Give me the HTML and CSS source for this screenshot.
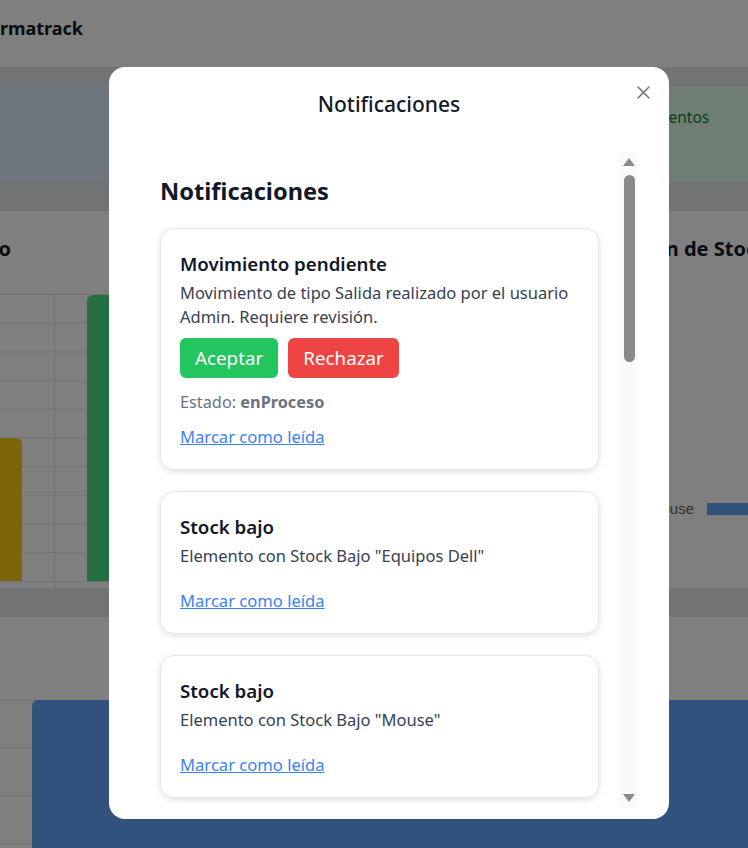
FILE: index.html
```html
<!DOCTYPE html>
<html lang="es">
<head>
<meta charset="utf-8">
<title>Informatrack</title>
<link rel="stylesheet" href="styles.css">
</head>
<body>
<div class="page">
  <header class="topbar"><span class="brand">Informatrack</span></header>
  <main class="dash">
    <section class="stats">
      <div class="stat stat-blue"><span class="stat-label">Total Productos</span></div>
      <div class="stat stat-green"><span class="stat-label">Movimientos</span></div>
    </section>
    <section class="charts">
      <div class="chart-card chart-a">
        <h3 class="chart-title">Stock por Producto</h3>
        <svg class="chart-svg" width="680" height="305" viewBox="0 0 680 305">
          <g stroke="rgba(0,0,0,0.1)" stroke-width="1">
            <line x1="0" y1="11.5" x2="680" y2="11.5"/>
            <line x1="0" y1="40.2" x2="680" y2="40.2"/>
            <line x1="0" y1="68.9" x2="680" y2="68.9"/>
            <line x1="0" y1="97.6" x2="680" y2="97.6"/>
            <line x1="0" y1="126.3" x2="680" y2="126.3"/>
            <line x1="0" y1="155" x2="680" y2="155"/>
            <line x1="0" y1="183.7" x2="680" y2="183.7"/>
            <line x1="0" y1="212.4" x2="680" y2="212.4"/>
            <line x1="0" y1="241.1" x2="680" y2="241.1"/>
            <line x1="0" y1="269.8" x2="680" y2="269.8"/>
            <line x1="0" y1="298.5" x2="680" y2="298.5"/>
            <line x1="233.5" y1="11" x2="233.5" y2="305"/>
          </g>
          <path d="M139 298 V161 a6 6 0 0 1 6 -6 H195 a6 6 0 0 1 6 6 V298 Z" fill="#facc15"/>
          <path d="M266 298 V18 a6 6 0 0 1 6 -6 H323 a6 6 0 0 1 6 6 V298 Z" fill="#4ade80"/>
        </svg>
      </div>
      <div class="chart-card chart-b">
        <h3 class="chart-title">Distribución de Stock</h3>
        <svg class="chart-svg" width="400" height="305" viewBox="0 0 400 305">
          <text x="137" y="231" text-anchor="end" class="axis-label">Mouse</text>
          <rect x="150" y="220" width="300" height="12" fill="#60a5fa"/>
        </svg>
      </div>
    </section>
    <section class="wide-card">
      <svg class="wide-svg" width="1200" height="240" viewBox="0 0 1200 240">
        <g stroke="rgba(0,0,0,0.1)" stroke-width="1">
          <line x1="0" y1="83.5" x2="1200" y2="83.5"/>
          <line x1="0" y1="130.5" x2="1200" y2="130.5"/>
          <line x1="0" y1="178.5" x2="1200" y2="178.5"/>
          <line x1="0" y1="226.5" x2="1200" y2="226.5"/>
        </g>
        <path d="M232 240 V89 a6 6 0 0 1 6 -6 H1200 V240 Z" fill="#60a5fa"/>
      </svg>
    </section>
  </main>
</div>

<div class="overlay">
  <div class="modal">
    <div class="modal-head">Notificaciones</div>
    <button class="close" type="button" aria-label="Cerrar">
      <svg width="13" height="13" viewBox="0 0 13 13"><path d="M1 1 L12 12 M12 1 L1 12" stroke="#6b7280" stroke-width="1.5" stroke-linecap="round"/></svg>
    </button>
    <div class="modal-body">
      <div class="scroll-content">
        <h2 class="list-title">Notificaciones</h2>
        <article class="note">
          <h4 class="note-title">Movimiento pendiente</h4>
          <p class="note-text">Movimiento de tipo Salida realizado por el usuario Admin. Requiere revisión.</p>
          <div class="note-actions">
            <button class="btn btn-accept" type="button">Aceptar</button>
            <button class="btn btn-reject" type="button">Rechazar</button>
          </div>
          <p class="note-status">Estado: <strong>enProceso</strong></p>
          <a class="note-link" href="#">Marcar como leída</a>
        </article>
        <article class="note">
          <h4 class="note-title">Stock bajo</h4>
          <p class="note-text">Elemento con Stock Bajo "Equipos Dell"</p>
          <a class="note-link note-link-spaced" href="#">Marcar como leída</a>
        </article>
        <article class="note">
          <h4 class="note-title">Stock bajo</h4>
          <p class="note-text">Elemento con Stock Bajo "Mouse"</p>
          <a class="note-link note-link-spaced" href="#">Marcar como leída</a>
        </article>
        <article class="note">
          <h4 class="note-title">Stock bajo</h4>
          <p class="note-text">Elemento con Stock Bajo "Teclado"</p>
          <a class="note-link note-link-spaced" href="#">Marcar como leída</a>
        </article>
      </div>
      <div class="scrollbar">
        <span class="sb-arrow sb-up"></span>
        <span class="sb-thumb"></span>
        <span class="sb-space"></span>
        <span class="sb-arrow sb-down"></span>
      </div>
    </div>
  </div>
</div>
</body>
</html>
```

FILE: styles.css
```css
* { box-sizing: border-box; }

html, body {
  margin: 0;
  padding: 0;
  height: 100%;
  overflow: hidden;
}

body {
  font-family: "Noto Sans", "Open Sans", sans-serif;
  background: #e5e7eb;
  color: #111827;
}

.page {
  width: 748px;
  height: 848px;
  overflow: hidden;
}

.topbar {
  height: 67px;
  background: #ffffff;
  padding: 16px 0;
}

.brand {
  display: block;
  margin-left: -37px;
  font-size: 18px;
  font-weight: 700;
  line-height: 24px;
  color: #111827;
  white-space: nowrap;
}

.dash {
  margin-left: -200px;
  width: 1400px;
  padding-top: 20px;
  display: flex;
  flex-direction: column;
  gap: 29px;
}

.stats, .charts {
  display: flex;
  gap: 24px;
}

.stat {
  height: 95px;
  border-radius: 8px;
  padding: 18px 24px;
}

.stat-blue { width: 767px; background: #dbeafe; }
.stat-green { width: 500px; background: #dcfce7; }

.stat-label {
  font-size: 15.5px;
  line-height: 24px;
  color: #15803d;
}

.stat-blue .stat-label { color: #1d4ed8; }

.chart-card {
  height: 377px;
  background: #ffffff;
  border-radius: 8px;
  padding: 24px 24px 0;
  overflow: hidden;
}

.chart-a { width: 709px; padding-left: 21px; }
.chart-b { width: 500px; }

.chart-title {
  margin: 0 0 20px;
  font-size: 20px;
  font-weight: 700;
  line-height: 28px;
  color: #111827;
  white-space: nowrap;
}

.chart-svg { display: block; overflow: visible; }

.axis-label {
  font-family: "Liberation Sans", Arial, sans-serif;
  font-size: 15px;
  fill: #666666;
}

.wide-card {
  height: 300px;
  background: #ffffff;
  border-radius: 8px;
  overflow: hidden;
}

.wide-svg { display: block; }

/* Modal */
.overlay {
  position: fixed;
  inset: 0;
  background: rgba(0, 0, 0, 0.5);
  padding: 67px 0 0 109px;
}

.modal {
  position: relative;
  width: 560px;
  height: 752px;
  background: #ffffff;
  border-radius: 16px;
  padding: 0 31px 11px 31px;
  display: flex;
  flex-direction: column;
}

.modal-head {
  height: 85px;
  padding-top: 23px;
  text-align: center;
  font-size: 21px;
  font-weight: 500;
  line-height: 28px;
  color: #111827;
}

.close {
  position: absolute;
  top: 19px;
  right: 19px;
  width: 13px;
  height: 13px;
  padding: 0;
  border: 0;
  background: none;
  display: flex;
}

.modal-body {
  display: flex;
  height: 656px;
}

.scroll-content {
  flex: 1;
  overflow: hidden;
  padding: 24px 21px 0 20px;
}

.list-title {
  margin: 0 0 22px;
  font-size: 23.6px;
  font-weight: 700;
  line-height: 30px;
  color: #111827;
}

.note {
  border: 1px solid #e5e7eb;
  border-radius: 14px;
  padding: 21px 20px 20px 19px;
  box-shadow: 0 2px 6px rgba(0, 0, 0, 0.12);
  margin-bottom: 21px;
  display: flex;
  flex-direction: column;
  align-items: flex-start;
}

.note-title {
  margin: 0;
  font-size: 18.7px;
  font-weight: 600;
  line-height: 28px;
  color: #111827;
}

.note-text {
  margin: 3px 0 0;
  font-size: 16.5px;
  line-height: 24px;
  color: #374151;
}

.note-actions {
  display: flex;
  gap: 10px;
  margin-top: 9px;
}

.btn {
  height: 40px;
  padding: 0 15px;
  border: 0;
  border-radius: 6px;
  font-family: inherit;
  font-size: 18.8px;
  color: #ffffff;
}

.btn-accept { background: #22c55e; }
.btn-reject { background: #ef4444; }

.note-status {
  margin: 12px 0 0;
  font-size: 16.3px;
  line-height: 24px;
  color: #6b7280;
}

.note-link {
  margin-top: 11px;
  font-size: 16.6px;
  line-height: 24px;
  color: #3b82f6;
  text-decoration: underline;
}

.note-link-spaced { margin-top: 21px; }

.scrollbar {
  width: 18px;
  background: #fafafa;
  display: flex;
  flex-direction: column;
  align-items: center;
  padding: 6px 0;
}

.sb-arrow {
  width: 0;
  height: 0;
  border-left: 6px solid transparent;
  border-right: 6px solid transparent;
}

.sb-up { border-bottom: 8px solid #8a8a8a; }
.sb-down { border-top: 8px solid #8a8a8a; }

.sb-thumb {
  width: 11px;
  height: 187px;
  margin-top: 9px;
  border-radius: 6px;
  background: #8a8a8a;
}

.sb-space { flex: 1; }
```
